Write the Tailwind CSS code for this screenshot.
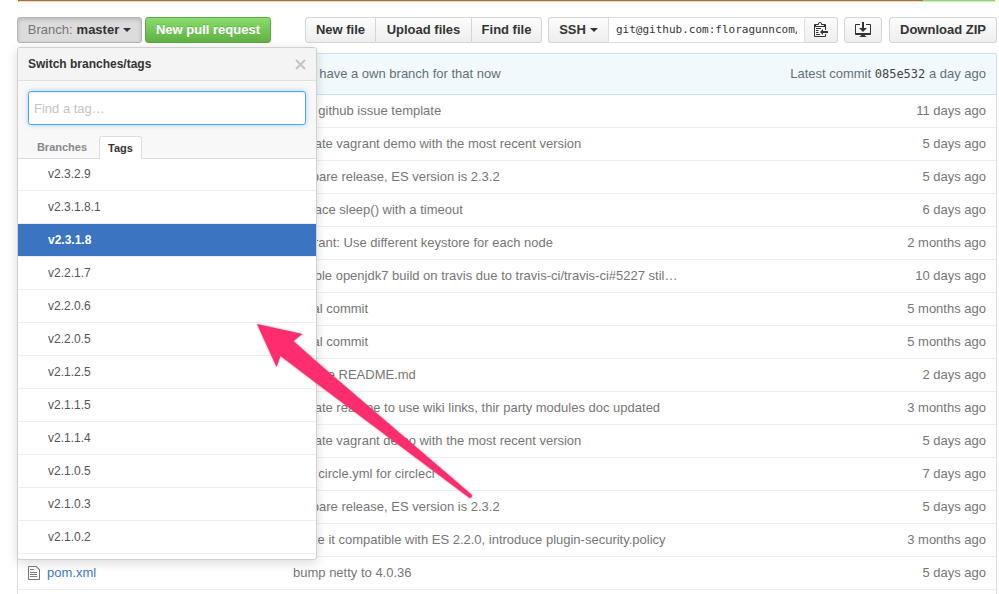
<!DOCTYPE html>
<html lang="en">
<head>
<meta charset="utf-8">
<title>Repository files</title>
<script src="https://cdn.jsdelivr.net/npm/@tailwindcss/browser@4"></script>
</head>
<body class="relative bg-white font-['Liberation_Sans',Arial,sans-serif] text-[13px] leading-5 text-[#333]">
<div class="ml-[17px] mr-[2px] flex min-h-screen flex-col">
  <div class="mx-px flex h-[2px] border-b border-[#ddd]"><span class="w-[905px] shrink bg-[#b07219]"></span><span class="w-[72px] bg-[#89e051]"></span></div>

  <div class="relative mt-[15px] flex h-[26px] font-bold">
    <button aria-expanded="true" class="flex w-[125px] items-center justify-center whitespace-nowrap rounded-[3px] border border-[#b5b5b5] bg-[#dcdcdc] shadow-[inset_0_2px_4px_rgba(0,0,0,0.15)]"><span class="font-normal text-[#767676]">Branch:</span><span class="ml-1">master</span><span class="ml-1 border-x-4 border-t-4 border-x-transparent border-t-[#333]"></span></button>
    <button class="ml-[3px] w-[126px] whitespace-nowrap rounded-[3px] border border-[#5ca941] bg-gradient-to-b from-[#8add6d] to-[#60b044] text-white text-shadow-[0_-1px_0_rgba(0,0,0,0.15)]">New pull request</button>
    <div class="ml-auto flex">
      <button class="w-[71px] whitespace-nowrap rounded-l-[3px] border border-[#d5d5d5] bg-gradient-to-b from-[#fcfcfc] to-[#eee]">New file</button>
      <button class="w-[95px] whitespace-nowrap border-y border-[#d5d5d5] bg-gradient-to-b from-[#fcfcfc] to-[#eee]">Upload files</button>
      <button class="w-[71px] whitespace-nowrap rounded-r-[3px] border border-[#d5d5d5] bg-gradient-to-b from-[#fcfcfc] to-[#eee]">Find file</button>
    </div>
    <div class="ml-[6px] flex">
      <button class="flex w-[60px] items-center justify-center rounded-l-[3px] border border-r-0 border-[#d5d5d5] bg-gradient-to-b from-[#fcfcfc] to-[#eee]">SSH<span class="ml-1 border-x-4 border-t-4 border-x-transparent border-t-[#333]"></span></button>
      <input aria-label="Clone URL" readonly value="git@github.com:floragunncom/search-guard.git" class="w-[197px] border border-[#ddd] px-[7px] font-['DejaVu_Sans_Mono',monospace] text-[11px] font-normal text-[#333]">
      <button aria-label="Copy to clipboard" class="flex w-[33px] items-center justify-center rounded-r-[3px] border border-l-0 border-[#d5d5d5] bg-gradient-to-b from-[#fcfcfc] to-[#eee]"><svg class="mb-[2px]" width="14" height="16" viewBox="0 0 14 16" fill="#333"><path d="M2 13h4v1H2v-1zm5-6H2v1h5V7zm2 3V8l-3 3 3 3v-2h5v-2H9zM4.500 9H2v1h2.500V9zM2 12h2.500v-1H2v1zm9 1h1v2c-.02.28-.11.52-.3.700-.190.180-.420.280-.700.300H1c-.550 0-1-.450-1-1V4c0-.550.450-1 1-1h3c0-1.110.890-2 2-2s2 .890 2 2h3c.550 0 1 .450 1 1v5h-1V6H1v9h10v-2zM2 5h8c0-.550-.450-1-1-1H8c-.550 0-1-.450-1-1s-.450-1-1-1-1 .450-1 1-.450 1-1 1H3c-.550 0-1 .450-1 1z"/></svg></button>
    </div>
    <button aria-label="Open in desktop" class="ml-[6px] flex w-[38px] items-center justify-center rounded-[3px] border border-[#d5d5d5] bg-gradient-to-b from-[#fcfcfc] to-[#eee]"><svg width="16" height="16" viewBox="0 0 16 16" fill="#333"><path d="M4 6h3V0h2v6h3l-4 4-4-4zm11-4h-4v1h4v8H1V3h4V2H1c-.550 0-1 .450-1 1v9c0 .550.450 1 1 1h5.340c-.250.610-.860 1.390-2.340 2h8c-1.480-.610-2.090-1.390-2.340-2H15c.550 0 1-.450 1-1V3c0-.550-.450-1-1-1z"/></svg></button>
    <button class="ml-[7px] w-[108px] whitespace-nowrap rounded-[3px] border border-[#d5d5d5] bg-gradient-to-b from-[#fcfcfc] to-[#eee]">Download ZIP</button>

    <section aria-label="Switch branches or tags" class="absolute left-0 top-[30px] z-10 w-[300px] overflow-hidden rounded-[3px] border border-[#d0d0d0] bg-white text-[12px] font-normal shadow-[0_3px_12px_rgba(0,0,0,0.15)]">
      <header class="flex h-[33px] items-center justify-between border-b border-[#e0e0e0] bg-[#f4f4f4] px-[10px]">
        <h2 class="font-bold">Switch branches/tags</h2>
        <button aria-label="Close" class="text-[#c4c4c4]"><svg width="11" height="11" viewBox="0 0 11 11" fill="none" stroke="currentColor" stroke-width="2"><path d="M1 1l9 9M10 1l-9 9"/></svg></button>
      </header>
      <div class="bg-[#f8f8f8] px-[10px] pt-[10px]">
        <input aria-label="Find a tag" placeholder="Find a tag…" class="h-[34px] w-full rounded-[3px] border border-[#51a7e8] bg-white px-[5px] text-[13px] shadow-[inset_0_1px_2px_rgba(0,0,0,0.075),0_0_5px_rgba(81,167,232,0.5)] outline-none placeholder:text-[#c4c4c4]">
      </div>
      <div class="flex h-[34px] items-end border-b border-[#ddd] bg-[#f8f8f8] pl-[10px] text-[11px] font-bold">
        <button class="h-[22px] w-[71px] pr-[3px] text-center text-[#888]">Branches</button>
        <button class="-mb-px h-[23px] w-[43px] rounded-t-[3px] border border-b-0 border-[#ddd] bg-white text-center text-[#333]">Tags</button>
      </div>
      <div class="h-[400px] overflow-hidden">
        <ul id="tags" class="-mt-px text-[#555]"></ul>
      </div>
    </section>
  </div>

  <main class="mt-[10px] flex-1 rounded-t-[3px] border border-b-0 border-[#ddd]">
    <div class="-mx-px -mt-px flex h-[42px] items-center justify-between rounded-t-[3px] border border-[#c5e4f5] bg-[#f2f9fc] px-[10px] text-[#5e7178]">
      <p class="pl-[271px]">we have a own branch for that now</p>
      <p>Latest commit <a href="#" class="font-['DejaVu_Sans_Mono',monospace] text-[12px] text-[#444]">085e532</a> a day ago</p>
    </div>
    <table class="w-full table-fixed border-separate border-spacing-0 text-[#767676]">
      <colgroup><col class="w-[29px]"><col class="w-[246px]"><col><col class="w-[130px]"></colgroup>
      <tbody id="files"></tbody>
    </table>
  </main>
</div>

<svg aria-hidden="true" class="pointer-events-none absolute left-[250px] top-[318px] z-20 drop-shadow-[0_0_1px_rgba(0,0,0,0.4)]" width="230" height="186" viewBox="250 318 230 186"><path fill="#ff2d6f" d="M257 324L302.500 334L293.500 341L317 362L471.500 494.500Q473 498 469.500 498L316 383L280.500 356L276.500 367Z"/></svg>

<script>
const tags = ['v2.3.2.9','v2.3.1.8.1','v2.3.1.8','v2.2.1.7','v2.2.0.6','v2.2.0.5','v2.1.2.5','v2.1.1.5','v2.1.1.4','v2.1.0.5','v2.1.0.3','v2.1.0.2'];
document.getElementById('tags').innerHTML = tags.map(t =>
  `<li class="${t === 'v2.3.1.8' ? 'bg-[#3b74c1] font-bold text-white' : ''} h-[33px] border-b border-[#eee]"><a href="#" class="block pl-[30px] leading-8">${t}</a></li>`).join('');
const files = [
  ['add github issue template','11 days ago'],
  ['update vagrant demo with the most recent version','5 days ago'],
  ['prepare release, ES version is 2.3.2','5 days ago'],
  ['replace sleep() with a timeout','6 days ago'],
  ['vagrant: Use different keystore for each node','2 months ago'],
  ['enable openjdk7 build on travis due to travis-ci/travis-ci#5227 stil…','10 days ago'],
  ['initial commit','5 months ago'],
  ['initial commit','5 months ago'],
  ['Update README.md','2 days ago'],
  ['update readme to use wiki links, thir party modules doc updated','3 months ago'],
  ['update vagrant demo with the most recent version','5 days ago'],
  ['add circle.yml for circleci','7 days ago'],
  ['prepare release, ES version is 2.3.2','5 days ago'],
  ['make it compatible with ES 2.2.0, introduce plugin-security.policy','3 months ago'],
  ['bump netty to 4.0.36','5 days ago','pom.xml']
];
const icon = '<svg class="ml-[10px]" width="12" height="16" viewBox="0 0 12 16" fill="#777"><path d="M6 5H2V4h4v1zM2 8h7V7H2v1zm0 2h7V9H2v1zm0 2h7v-1H2v1zm10-7.500V14c0 .550-.450 1-1 1H1c-.550 0-1-.450-1-1V2c0-.550.450-1 1-1h7.500L12 4.500zM11 5L8 2H1v12h10V5z"/></svg>';
document.getElementById('files').innerHTML = files.map(([m, a, n]) =>
  `<tr class="h-[33px]"><td class="border-b border-[#eee]">${n ? icon : ''}</td><td class="border-b border-[#eee]">${n ? `<a href="#" class="text-[#4078c0]">${n}</a>` : ''}</td><td class="whitespace-nowrap border-b border-[#eee]">${m}</td><td class="whitespace-nowrap border-b border-[#eee] pr-[10px] text-right">${a}</td></tr>`).join('');
</script>
</body>
</html>
